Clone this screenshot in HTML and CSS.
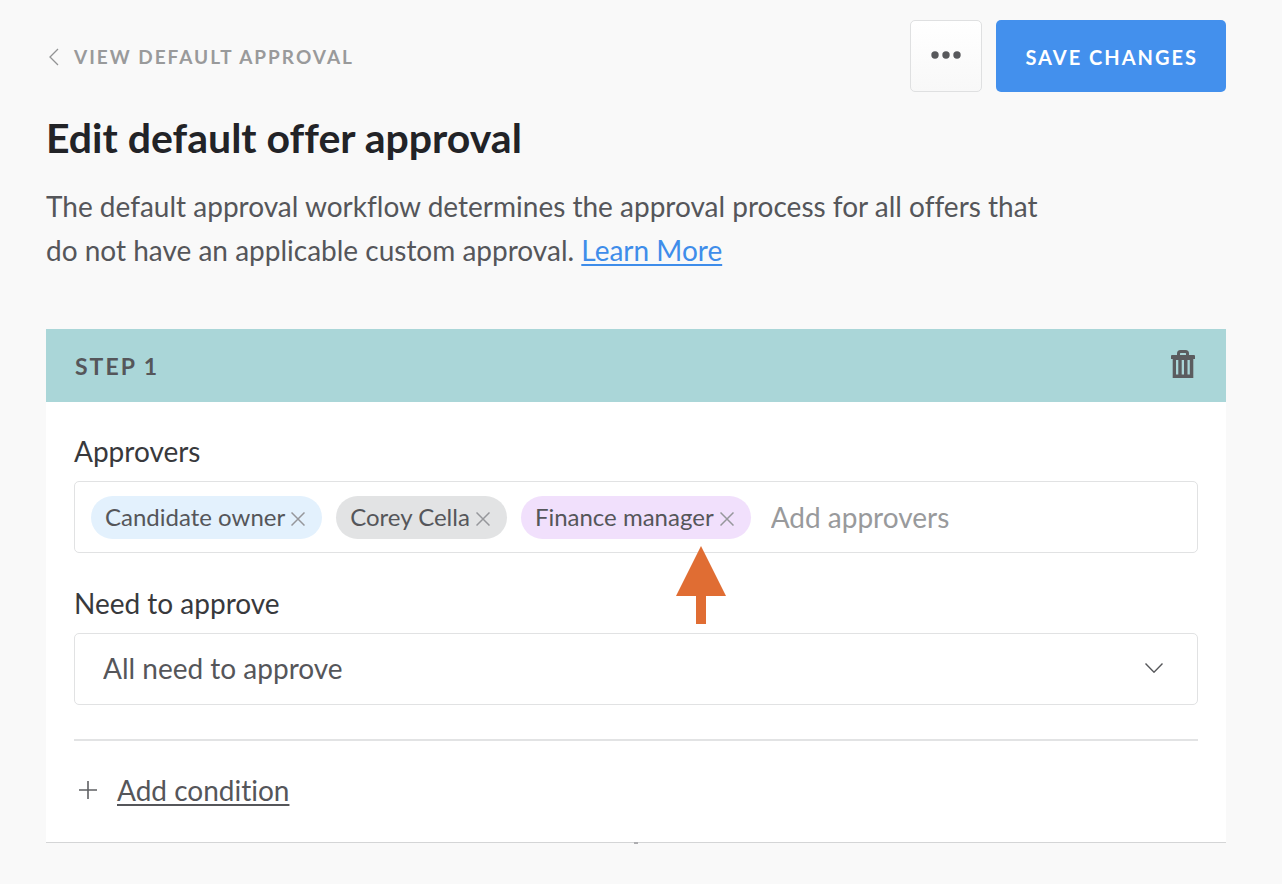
FILE: index.html
```html
<!DOCTYPE html>
<html lang="en">
<head>
<meta charset="utf-8">
<meta name="viewport" content="width=device-width, initial-scale=1">
<title>Edit default offer approval</title>
<link rel="stylesheet" href="styles.css">
</head>
<body>
<main class="page">
  <header class="topbar">
    <a class="back" href="#">
      <svg class="back-icon" width="12" height="18" viewBox="0 0 12 18" aria-hidden="true"><path d="M10 1 2 9l8 8"/></svg>
      VIEW DEFAULT APPROVAL
    </a>
    <div class="actions">
      <button class="more" type="button" aria-label="More options">
        <svg width="30" height="8" viewBox="0 0 30 8" aria-hidden="true"><circle cx="4" cy="4" r="3.7"/><circle cx="15" cy="4" r="3.7"/><circle cx="26" cy="4" r="3.7"/></svg>
      </button>
      <button class="save" type="button">SAVE CHANGES</button>
    </div>
  </header>

  <h1 class="title">Edit default offer approval</h1>
  <p class="intro">The default approval workflow determines the approval process for all offers that do not have an applicable custom approval. <a class="learn" href="#">Learn More</a></p>

  <section class="step">
    <div class="step-head">
      <h2 class="step-title">STEP 1</h2>
      <button class="trash" type="button" aria-label="Delete step">
        <svg width="24" height="28" viewBox="0 0 24 28" aria-hidden="true">
          <path class="handle" d="M7.500 6V3.500a2 2 0 0 1 2-2h5a2 2 0 0 1 2 2V6"/>
          <path fill-rule="evenodd" d="M1 5h22a1 1 0 0 1 1 1v3h-1.700v19H1.700V9H0V6a1 1 0 0 1 1-1zM5 10v14.500h2.300V10zM10.700 10v14.500h2.300V10zM16.500 10v14.500h2.300V10z"/>
        </svg>
      </button>
    </div>

    <div class="step-body">
      <label class="label" for="approvers">Approvers</label>
      <div class="tokens">
        <span class="chip chip-blue">Candidate owner
          <button class="remove" type="button" aria-label="Remove Candidate owner"><svg width="14" height="14" viewBox="0 0 14 14" aria-hidden="true"><path d="M.5.5l13 13M13.500.5l-13 13"/></svg></button>
        </span>
        <span class="chip chip-gray">Corey Cella
          <button class="remove" type="button" aria-label="Remove Corey Cella"><svg width="14" height="14" viewBox="0 0 14 14" aria-hidden="true"><path d="M.5.5l13 13M13.500.5l-13 13"/></svg></button>
        </span>
        <span class="chip chip-purple">Finance manager
          <button class="remove" type="button" aria-label="Remove Finance manager"><svg width="14" height="14" viewBox="0 0 14 14" aria-hidden="true"><path d="M.5.5l13 13M13.500.5l-13 13"/></svg></button>
          <svg class="pointer" width="50" height="78" viewBox="0 0 50 78" aria-hidden="true"><path d="M25 0l25 50H30v28H20V50H0z"/></svg>
        </span>
        <input class="token-input" id="approvers" type="text" placeholder="Add approvers">
      </div>

      <label class="label" for="need">Need to approve</label>
      <div class="select-wrap">
        <select class="select" id="need">
          <option>All need to approve</option>
        </select>
        <svg class="chevron" width="18" height="10" viewBox="0 0 18 10" aria-hidden="true"><path d="M.5.5 9 9.200 17.500.5"/></svg>
      </div>

      <div class="condition">
        <svg class="plus" width="18" height="18" viewBox="0 0 18 18" aria-hidden="true"><path d="M9 0v18M0 9h18"/></svg>
        <a class="add" href="#">Add condition</a>
      </div>
    </div>
    <span class="connector"></span>
  </section>
</main>
</body>
</html>
```
FILE: styles.css
```css
*, *::before, *::after { box-sizing: border-box; }

body {
  margin: 0;
  background: #f9f9f9;
  color: #55565a;
  font-family: Lato, "Open Sans", sans-serif;
  font-size: 28px;
  font-variant-ligatures: none;
  line-height: 44px;
}

button, input, select { font: inherit; color: inherit; }
button { cursor: pointer; }

.page { padding: 20px 56px 40px 46px; }

.topbar {
  display: flex;
  justify-content: space-between;
  align-items: center;
}

.back {
  display: flex;
  align-items: center;
  gap: 14px;
  padding: 2px 0 0 2px;
  color: #999a9b;
  font-size: 19px;
  font-weight: 700;
  letter-spacing: 2px;
  text-decoration: none;
}
.back-icon { fill: none; stroke: #929394; stroke-width: 1.3; }

.actions { display: flex; gap: 14px; }
.more {
  display: grid;
  place-items: center;
  width: 72px;
  height: 72px;
  padding: 0 0 2px;
  border: 1px solid #dfe0e1;
  border-radius: 5px;
  background: linear-gradient(#fff, #f8f8f8);
  fill: #58595c;
}
.save {
  height: 72px;
  padding: 2px 28px 0 29px;
  border: 0;
  border-radius: 5px;
  background: #4390ed;
  color: #fff;
  font-size: 20px;
  font-weight: 700;
  letter-spacing: 2px;
}

.title {
  margin: 20px 0 0;
  color: #222327;
  font-size: 41px;
  font-weight: 700;
  line-height: 52px;
}

.intro { max-width: 1000px; margin: 20px 0 0; }
.learn { color: #3f8dea; text-decoration-thickness: 2px; text-underline-offset: 3px; }

.step {
  position: relative;
  margin-top: 57px;
  border-bottom: 1px solid #d4d5d6;
  background: #fff;
}
.step-head {
  display: flex;
  justify-content: space-between;
  align-items: center;
  height: 73px;
  padding: 0 31px 3px 29px;
  background: #aad6d8;
}
.step-title {
  margin: 0;
  padding-top: 4px;
  font-size: 23px;
  font-weight: 700;
  letter-spacing: 2px;
}
.trash { display: grid; padding: 0; border: 0; background: none; fill: #5b5c5f; }
.handle { fill: none; stroke: #5b5c5f; stroke-width: 3; }

.step-body { padding: 27px 28px 30px; }
.label { display: block; padding-bottom: 8px; color: #38393c; }

.tokens {
  display: flex;
  align-items: center;
  gap: 14px;
  min-height: 72px;
  margin-bottom: 28px;
  padding: 0 16px;
  border: 1px solid #e1e2e3;
  border-radius: 5px;
}
.chip {
  position: relative;
  display: flex;
  align-items: center;
  gap: 6px;
  height: 43px;
  padding: 0 17px 0 14px;
  border-radius: 22px;
  font-size: 24px;
  white-space: nowrap;
}
.chip-blue { background: #e3f1fd; }
.chip-gray { background: #e2e3e4; }
.chip-purple { background: #f1e0fc; }
.remove {
  display: grid;
  padding: 3px 0 0;
  border: 0;
  background: none;
  stroke: #96979b;
  stroke-width: 1.5;
}
.pointer {
  position: absolute;
  z-index: 1;
  top: 50px;
  right: 25px;
  fill: #e06d33;
}
.token-input {
  flex: 1;
  min-width: 0;
  height: 44px;
  padding: 0 6px;
  border: 0;
  outline: 0;
  background: none;
}
.token-input::placeholder { color: #999a9c; opacity: 1; }

.select-wrap { display: grid; align-items: center; }
.select {
  grid-area: 1 / 1;
  width: 100%;
  height: 72px;
  padding: 0 60px 2px 28px;
  border: 1px solid #e1e2e3;
  border-radius: 5px;
  appearance: none;
  background: #fff;
}
.chevron {
  grid-area: 1 / 1;
  justify-self: end;
  margin: 0 35px 2px 0;
  fill: none;
  stroke: #56575a;
  stroke-width: 1.4;
  pointer-events: none;
}

.condition {
  display: flex;
  align-items: center;
  gap: 20px;
  margin-top: 34px;
  padding: 27px 0 0 5px;
  border-top: 2px solid #e2e3e4;
}
.plus { stroke: #5f6063; stroke-width: 1.6; }
.add { color: inherit; text-decoration-thickness: 2px; text-underline-offset: 3px; }

.connector {
  position: absolute;
  top: 100%;
  left: 50%;
  width: 4px;
  height: 2px;
  margin-left: -2px;
  background: #adadb0;
}
```
